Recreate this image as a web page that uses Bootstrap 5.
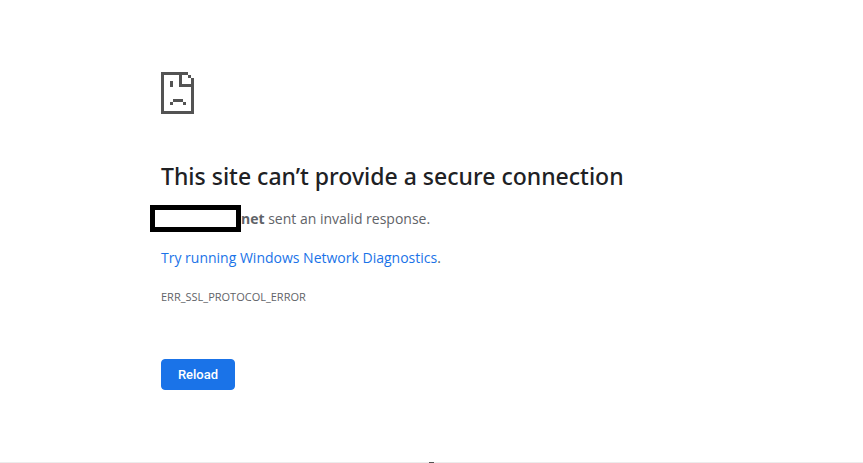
<!DOCTYPE html>
<html lang="en">
<head>
<meta charset="utf-8">
<meta name="viewport" content="width=device-width, initial-scale=1">
<title>Privacy error</title>
<link href="https://cdn.jsdelivr.net/npm/bootstrap@5.3.0/dist/css/bootstrap.min.css" rel="stylesheet">
<style>
body { font-family: "Open Sans", "Noto Sans", sans-serif; font-size: 14px; line-height: 20px; color: #5f6368; background: #fff; }
.error-page { max-width: 541px; padding-top: 72px; }
.page-icon { width: 33px; height: 42px; margin-bottom: 47px; color: #535353; }
.error-title { font-family: "Noto Sans", sans-serif; font-size: 23px; line-height: 30px; font-weight: 500; color: #202124; margin-bottom: 14px; }
.host-row { min-height: 27px; margin-left: -11px; margin-bottom: 16px; }
.redacted { width: 91px; height: 27px; border: 5px solid #000; background: #fff; }
.diagnostics { margin-bottom: 19px; }
.diagnostics a { color: #1a73e8; }
.error-code { font-size: 11px; margin-bottom: 52px; }
.btn-reload { --bs-btn-color: #fff; --bs-btn-bg: #1a73e8; --bs-btn-border-color: #1a73e8; --bs-btn-hover-color: #fff; --bs-btn-hover-bg: #1765cc; --bs-btn-hover-border-color: #1765cc; --bs-btn-border-radius: 4px; --bs-btn-padding-x: 15px; --bs-btn-padding-y: 5px; --bs-btn-font-size: 13px; --bs-btn-line-height: 19px; --bs-btn-font-weight: 500; --bs-btn-font-family: Roboto, sans-serif; min-width: 74px; }
.page-end { height: 1px; background: #ececec; }
.page-end span { width: 5px; height: 1px; background: #535353; }
</style>
</head>
<body>
<div class="d-flex flex-column min-vh-100">
  <main class="error-page w-100 mx-auto flex-grow-1">
    <svg class="page-icon d-block" viewBox="0 0 33 42" fill="currentColor" shape-rendering="crispEdges" aria-hidden="true">
      <path d="M0 0h27v3H21v9h12v3H18V3H3v36h27V6h3v36H0zM27 3h3v3H27zM9 9h3v6H9zM12 27h10v3H12zM9 30h3v3H9zM22 30h3v3H22z"/>
    </svg>
    <h1 class="error-title">This site can’t provide a secure connection</h1>
    <p class="host-row d-flex align-items-center"><span class="redacted flex-shrink-0"></span><span><strong>net</strong> sent an invalid response.</span></p>
    <p class="diagnostics"><a href="#" class="text-decoration-none">Try running Windows Network Diagnostics</a>.</p>
    <div class="error-code">ERR_SSL_PROTOCOL_ERROR</div>
    <button type="button" class="btn btn-reload">Reload</button>
  </main>
  <footer class="page-end d-flex justify-content-center"><span></span></footer>
</div>
<script src="https://cdn.jsdelivr.net/npm/bootstrap@5.3.0/dist/js/bootstrap.bundle.min.js"></script>
</body>
</html>
